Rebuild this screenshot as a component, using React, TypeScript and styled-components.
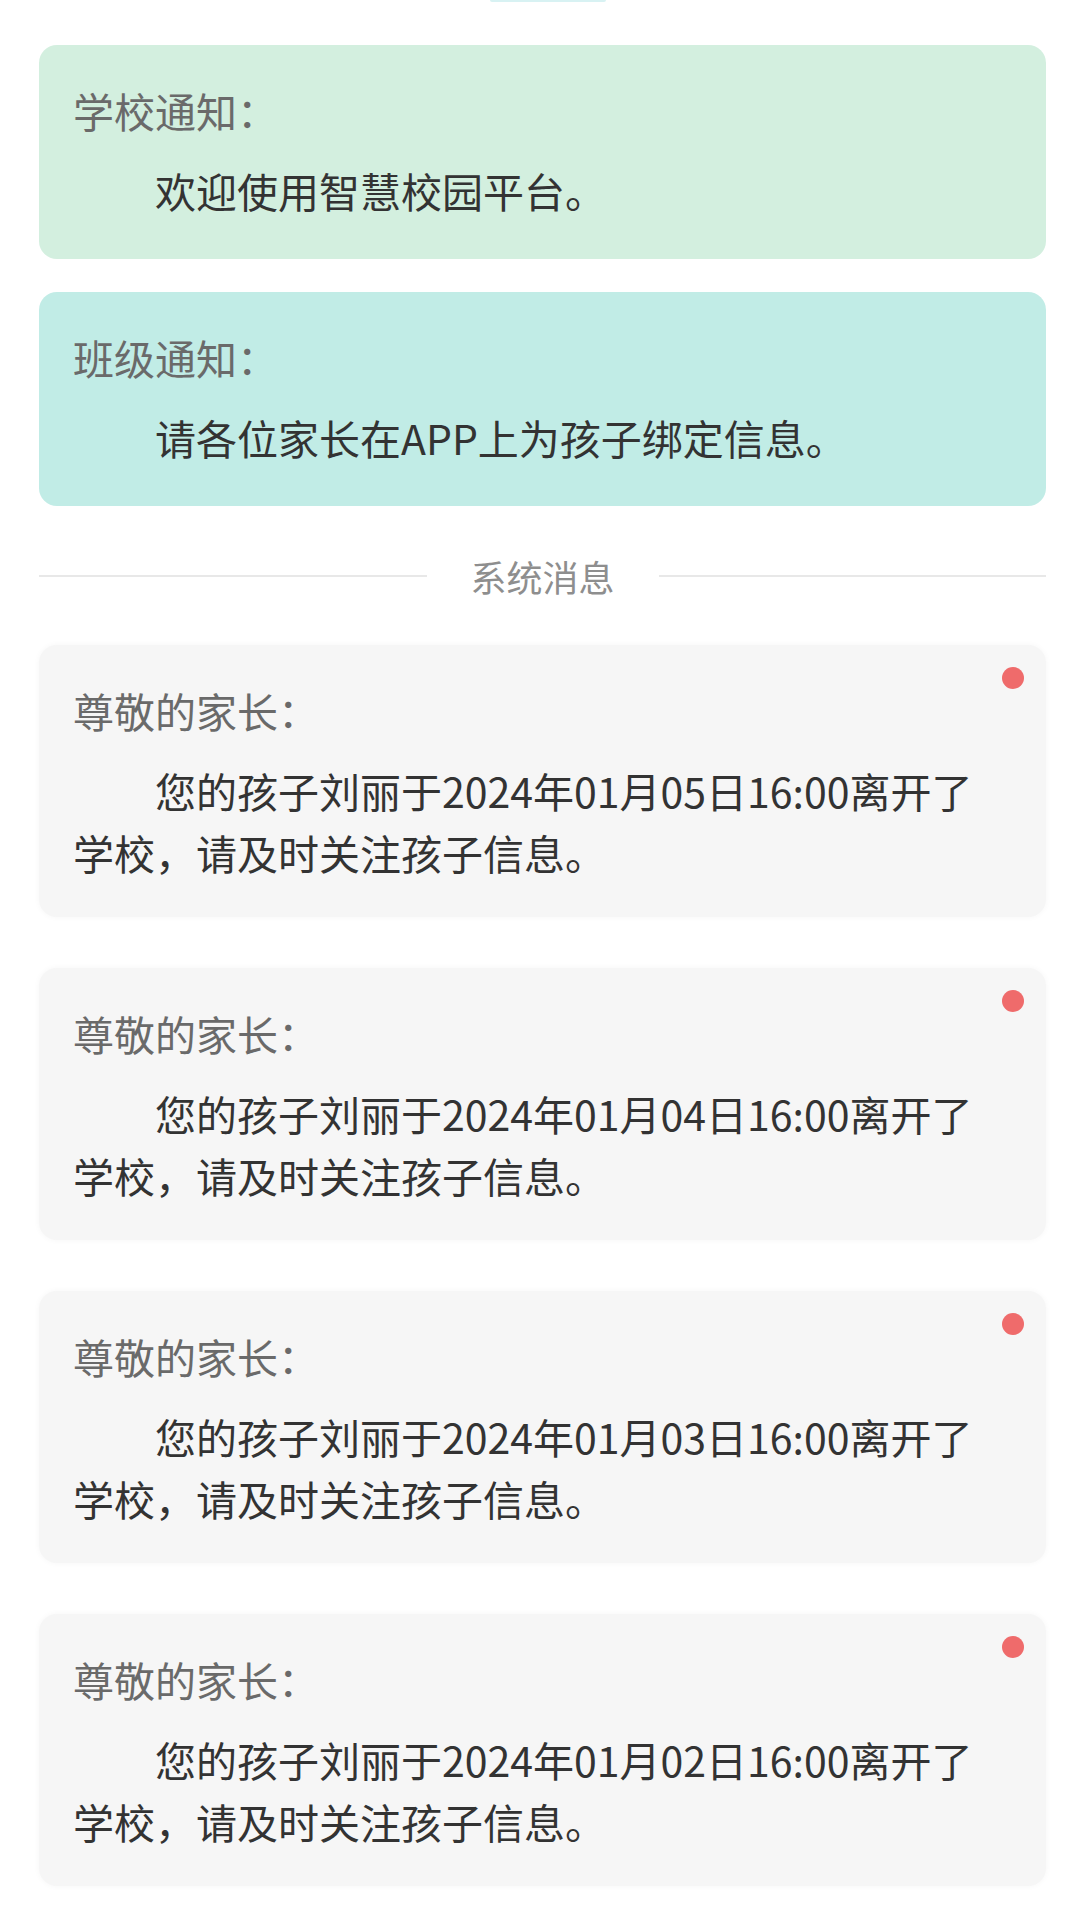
import React from "react";
import styled, { createGlobalStyle } from "styled-components";

const GlobalStyle = createGlobalStyle`
  html, body {
    margin: 0;
    padding: 0;
    background: #ffffff;
  }
  body {
    font-family: "Noto Sans CJK SC", "Noto Sans", "Liberation Sans", sans-serif;
    -webkit-font-smoothing: antialiased;
  }
`;

const Page = styled.div`
  width: 1080px;
  min-height: 1920px;
  box-sizing: border-box;
  padding: 0 34px 0 39px;
  display: flex;
  flex-direction: column;
  background: #ffffff;
`;

const TopStrip = styled.div`
  align-self: center;
  width: 116px;
  height: 2px;
  margin-left: 11px;
  margin-bottom: 43px;
  background: #d8f2f3;
  border-radius: 0 0 2px 2px;
`;

const toneBg: Record<string, string> = {
  green: "#d3efdf",
  teal: "#c1ece6",
  gray: "#f6f6f6",
};

const Card = styled.div<{ $tone: "green" | "teal" | "gray" }>`
  position: relative;
  box-sizing: border-box;
  width: 100%;
  border-radius: 18px;
  background: ${(p) => toneBg[p.$tone]};
  padding: 34px 34px ${(p) => (p.$tone === "gray" ? "34px" : "38px")} 34px;
  box-shadow: ${(p) =>
    p.$tone === "gray" ? "0 0 6px rgba(0, 0, 0, 0.04)" : "none"};
`;

const NoticeList = styled.div`
  display: flex;
  flex-direction: column;
  gap: 33px;
`;

const MessageList = styled.div`
  display: flex;
  flex-direction: column;
  gap: 51px;
`;

const Title = styled.div`
  font-size: 41px;
  line-height: 62px;
  color: #6a6a6a;
`;

const Body = styled.div`
  margin-top: 18px;
  font-size: 41px;
  line-height: 62px;
  color: #333333;
  text-indent: 2em;
  word-break: break-all;
`;

const UnreadDot = styled.span`
  position: absolute;
  top: 22px;
  right: 22px;
  width: 22px;
  height: 22px;
  border-radius: 50%;
  background: #ef6b6b;
`;

const Divider = styled.div`
  display: flex;
  align-items: center;
  height: 50px;
  margin: 45px 0 44px;
`;

const DividerLine = styled.div`
  flex: 1;
  height: 2px;
  background: #e8e8e8;
`;

const DividerText = styled.span`
  padding: 0 44px;
  font-size: 36px;
  line-height: 50px;
  color: #8e8e8e;
`;

const notices = [
  { title: "学校通知：", body: "欢迎使用智慧校园平台。", tone: "green" as const },
  { title: "班级通知：", body: "请各位家长在APP上为孩子绑定信息。", tone: "teal" as const },
];

const messages = ["05", "04", "03", "02"].map(
  (d) => `您的孩子刘丽于2024年01月${d}日16:00离开了学校，请及时关注孩子信息。`
);

export default function App() {
  return (
    <>
      <GlobalStyle />
      <Page>
        <TopStrip />
        <NoticeList>
          {notices.map((n) => (
            <Card key={n.title} $tone={n.tone}>
              <Title>{n.title}</Title>
              <Body>{n.body}</Body>
            </Card>
          ))}
        </NoticeList>
        <Divider>
          <DividerLine />
          <DividerText>系统消息</DividerText>
          <DividerLine />
        </Divider>
        <MessageList>
          {messages.map((text) => (
            <Card key={text} $tone="gray">
              <UnreadDot />
              <Title>尊敬的家长：</Title>
              <Body>{text}</Body>
            </Card>
          ))}
        </MessageList>
      </Page>
    </>
  );
}
